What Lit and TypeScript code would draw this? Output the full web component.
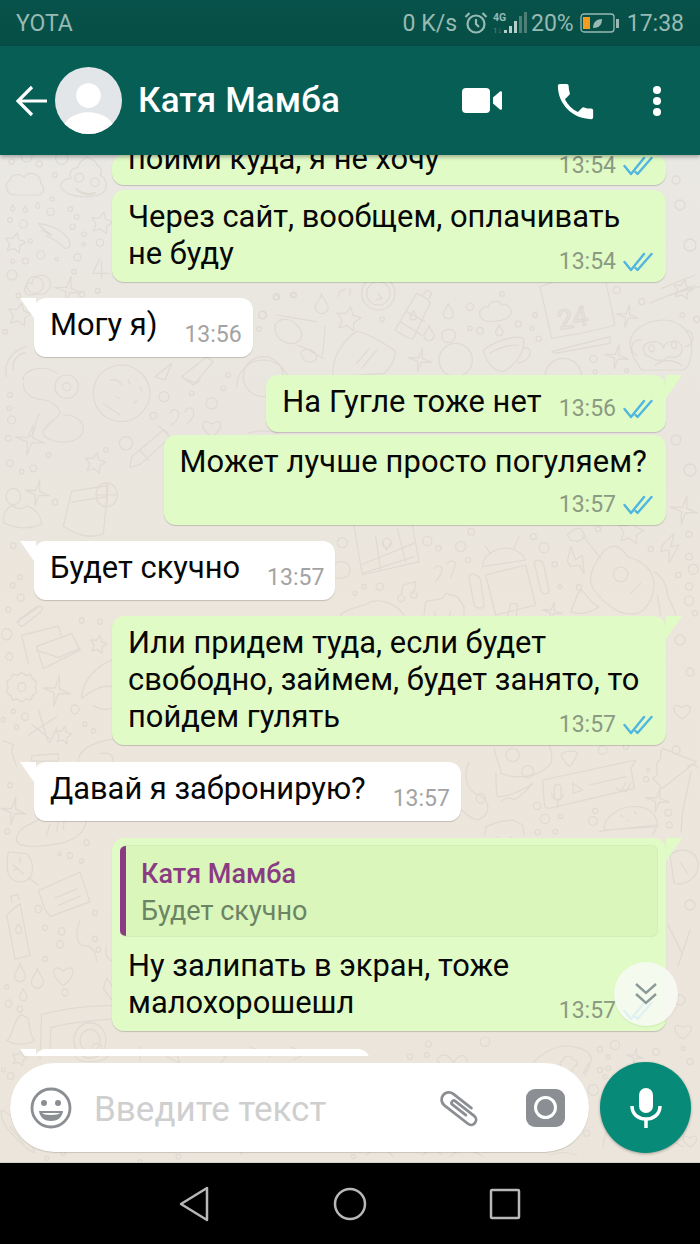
import { LitElement, html, css, svg } from "lit";
import { customElement } from "lit/decorators.js";

type Msg = {
  out: boolean; lines: string[]; time: string; tail?: boolean; wide?: boolean;
  mode: "row" | "under" | "overlap"; reply?: boolean; cls?: string;
};

const msgs: Msg[] = [
  { out: true, wide: true, lines: ["пойми куда, я не хочу"], time: "13:54", mode: "overlap", cls: "clipped" },
  { out: true, wide: true, lines: ["Через сайт, вообщем, оплачивать", "не буду"], time: "13:54", mode: "overlap", cls: "g5" },
  { out: false, tail: true, lines: ["Могу я)"], time: "13:56", mode: "row", cls: "g16" },
  { out: true, tail: true, lines: ["На Гугле тоже нет"], time: "13:56", mode: "row", cls: "g18" },
  { out: true, lines: ["Может лучше просто погуляем?"], time: "13:57", mode: "under", cls: "g3" },
  { out: false, tail: true, lines: ["Будет скучно"], time: "13:57", mode: "row", cls: "g16" },
  { out: true, tail: true, wide: true, lines: ["Или придем туда, если будет", "свободно, займем, будет занято, то", "пойдем гулять"], time: "13:57", mode: "overlap", cls: "g16" },
  { out: false, tail: true, lines: ["Давай я забронирую?"], time: "13:57", mode: "row", cls: "g17" },
  { out: true, tail: true, wide: true, reply: true, lines: ["Ну залипать в экран, тоже", "малохорошешл"], time: "13:57", mode: "overlap", cls: "g17" },
];

const ticks = html`<svg class="ticks" viewBox="0 0 30 20" fill="none" stroke="#4fb6e0" stroke-width="2.400" stroke-linecap="round" stroke-linejoin="round"><path d="M1.500 10l6.500 8L21 2"/><path d="M12.500 16l2 2L28.500 2"/></svg>`;

const star5 = (x: number, y: number, r: number) => {
  let d = "";
  for (let i = 0; i < 10; i++) {
    const a = i * Math.PI / 5 - Math.PI / 2 + .2, q = i % 2 ? r * .5 : r;
    d += `${i ? "L" : "M"}${(x + Math.cos(a) * q).toFixed(1)} ${(y + Math.sin(a) * q).toFixed(1)}`;
  }
  return d + "Z";
};
const star4 = (x: number, y: number, r: number) => {
  let d = "";
  for (let i = 0; i < 8; i++) {
    const a = i * Math.PI / 4 - Math.PI / 2 + .2, q = i % 2 ? r * .22 : r;
    d += `${i ? "L" : "M"}${(x + Math.cos(a) * q).toFixed(1)} ${(y + Math.sin(a) * q).toFixed(1)}`;
  }
  return d + "Z";
};
const heart = (x: number, y: number, s: number) => `M${x} ${y + s}C${x - s * 1.5} ${y},${x - s * .9} ${y - s},${x} ${y - s * .25}C${x + s * .9} ${y - s},${x + s * 1.5} ${y},${x} ${y + s}Z`;
const drop = (x: number, y: number, s: number) => `M${x} ${y - s}C${x + s * .2} ${y - s * .2},${x + s * .7} ${y},${x + s * .7} ${y + s * .4}A${s * .7} ${s * .7} 0 0 1 ${x - s * .7} ${y + s * .4}C${x - s * .7} ${y},${x - s * .2} ${y - s * .2},${x} ${y - s}Z`;

type Region = { o: [number, number]; s?: [number, number]; c: number[][]; p: string[]; r?: number[][] };

const regions: Region[] = [
  {
    o: [0, 155],
    c: [[35,20,8],[118,27,9],[165,60,7],[157,132,6],[30,195,7],[70,207,12],[152,170,11],[211,162,7],[230,185,7],[218,215,8],[252,238,7],[251,268,5],[300,263,11],[91,258,6],[122,300,12],[76,318,9],[38,318,6],[170,313,5],[232,307,11],[222,350,7],[36,360,15],[293,407,7],[55,422,7],[185,10,18],[80,5,16],[238,68,13],[285,82,13]],
    p: [
      "M45 120c-25 0-35-32-15-45 5-18 30-22 42-8 15-22 52-10 50 18 15 12 10 35-10 35z",
      "M260 5c10 10 30 8 30 25 15 5 18 22 10 30 15 8 25 25 15 45 -6 14-30 20-60 20-35 0-65-10-72-30-4-16 18-25 30-25-8-14 0-30 20-32 0-15 15-20 27-33z",
      "M228 100c15 15 40 20 58 12-5 14-48 8-58-12z",
      drop(38,158,9), drop(75,162,9), drop(113,150,9),
      "M115 205c40 5 85 25 95 60 2 12-10 20-20 12-18-22-35-25-50-35 8-2 12-2 15-2-15-12-30-18-40-35z M125 225c8 5 18 10 28 14",
      star5(45,265,32), star5(305,205,34),
      "M85 420c-20-10-10-40 12-35 0-25 38-35 52-8 8 18-5 35-20 40z",
      star4(205,405,42),
      "M300 310l-22 45h50M305 320v48",
    ],
  },
  {
    o: [0, 280],
    c: [[15,155,7],[35,420,12],[30,345,7],[28,385,7],[25,475,9],[30,550,10],[65,575,7],[100,565,10],[145,525,7],[318,510,7],[378,490,20],[460,407,10],[492,350,15],[575,340,7],[635,370,17],[685,285,7],[670,325,7],[788,105,12],[830,50,9],[880,45,9],[200,320,35],[200,320,12],[105,15,25],[245,42,9],[293,32,7]],
    p: [
      star5(58,105,36),
      "M20 290c-10-40 15-80 60-90 M40 270c-5-25 10-45 35-52 M70 300c-5-30 60-50 100-20 M70 310c0 35 30 45 60 50 20 0 50 20 50 40-10 20-50 35-50 60 0 15 40 30 70 25 30 0 50-20 50-40 0-20-20-40-60-40 M120 400c-20 20-10 60-30 70",
      "M280 340c0-50 40-85 85-85s85 40 85 85-40 85-85 85-85-35-85-85z",
      "M330 300c20-5 30 5 35 15M350 350l8 6M385 300l5 12M400 370l10-8M310 370c10 10 30 20 50 35M420 320l5 12",
      "M510 400c10-20 30-10 25 10-5 15-15 20-22 25M555 395c10-20 32-10 25 12-5 14-15 20-20 25",
      heart(635,440,30),
      star4(90,480,45),
      star5(285,550,32),
      "M395 530l95-80 20 22-90 82-30 8zM420 510l25 30M505 460l-30-22",
      "M465 290l50-40 -20 50zM545 290l75-60 20 15-60 70zM550 295l40 15 10-10",
      "M710 320a80 80 0 1 1 160 0",
      "M745 460c30-10 60-10 90 0",
    ],
  },
  {
    o: [250, 280],
    c: [[37,105,11],[27,147,7],[78,52,8],[132,45,7],[396,118,7],[660,80,11],[855,105,7],[805,132,9],[660,145,7],[690,152,10],[845,145,6],[866,176,8],[756,42,7],[1100,30,11],[1175,65,9],[1297,105,7],[1340,118,9],[1030,237,11],[617,240,50],[385,40,50],[385,40,35],[40,290,60],[940,290,55],[1035,275,6],[1130,272,6]],
    p: [
      drop(215,70,28),
      "M265 50c0-15 6-18 20-22M300 25v20",
      "M385 40l10 15-18 5",
      "M80 105l120 20M75 145c0-30 40-40 70-5 25 30 0 55-30 50-25-5-40-25-40-45zM140 195c25 5 50 25 80 40 M160 210c20-10 40 10 40 20 0 15-30 25-40 5-10-15-10-20 0-25zM225 140c-2 20-2 50-8 85",
      star5(295,118,38),
      "M255 240c5-25 40-75 65-85 15-5 90 40 112 55 10 10-5 50-30 70l-150 10c-10-10 0-40 3-50zM320 250l38-45M335 265l45-55",
      "M435 150l65-110c25 10 40 20 40 30l-50 105c-15 5-40-15-55-25zM520 45l10-15 15 8-8 18M450 125l65 40M470 95l55 30",
      drop(490,105,14), drop(595,92,22), drop(537,158,22), drop(748,150,16),
      "M575 165c0-20 40-25 42 0 0 25-42 35-42 0z",
      "M715 125c-35-5-35-45 0-45 5-20 35-20 40-5 20-10 35 20 25 30-5 15-40 20-65 20z",
      "M700 210c40-30 100-45 120-35 10 50-40 90-60 100-30 0-55-35-60-65zM720 220c30-20 60-25 85-25M820 205c25-10 35 30-15 45",
      "M870 20c50-20 130-40 190-50l35 165c-50 15-130 30-190 40zM905 215l175-45v20l-165 30z",
      star4(510,240,36),
      star4(1132,108,34), star4(1100,230,36),
      "M1200 70c30-15 100-40 150-50M1235 25l100-40M1235 55l100-40",
      "M1140 190c0-40 50-70 100-70s90 40 85 90-20 60-30 60h-120c-20-30-35-50-35-80z",
      "M1180 200c20-25 60-15 60 5 5-25 50-30 55-5 5 30-20 35-40 30-15 15-40 15-55 0-15 0-20-15-20-30z",
      "M1205 205m-8 0a8 10 0 1 0 16 0a8 10 0 1 0-16 0M1272 195m-8 0a8 10 0 1 0 16 0a8 10 0 1 0-16 0",
      "M1215 255c20-15 50-20 80 0",
      "M1175 180c-25-5-45 30-15 45M1310 150c30 10 20 50-5 50",
    ],
  },
  {
    o: [0, 480], s: [3, 2.703],
    c: [[40,178,8],[60,262,7],[38,285,7],[62,318,10],[25,350,7],[20,417,15],[28,477,10],[245,380,7],[300,383,7],[75,640,10],[40,625,6],[10,648,6],[50,668,6],[225,620,12],[255,660,6],[280,678,6],[30,825,7],[22,950,7],[260,980,8],[210,1015,8],[245,1030,6],[178,1010,5],[115,1160,10],[135,1210,7],[185,1220,10],[180,1255,10],[135,1295,7],[195,1385,9],[25,1415,10],[20,1370,6],[285,1170,7],[285,1240,7],[295,1270,7],[165,60,8],[40,45,22],[320,40,32],[65,560,12],[270,1515,48],[270,1515,30]],
    p: [
      "M10 115c0-30 15-45 30-45 10 10 30 10 40 0 20 5 45 25 45 50-40 15-80 10-115-5z",
      star4(112,35,36),
      "M190 125l25-95 110-15-15 130c-35 15-80 5-120-20zM215 60l105-15",
      "M320 10l0 60M290 40l60 0",
      "M50 385l70-45M60 375l50-32c15-8 25 5 10 15l-50 35c-12 8-20-8-10-18z",
      "M65 420l110-25 10 30M85 495l-20-75M130 510l110-50-25-45-105 35zM110 460l65 20 65-25",
      star5(295,445,26),
      "M65 520l12 8 15-3 6 13 12 7-4 15 4 15-12 7-6 13-15-3-12 8-12-8-15 3-6-13-12-7 4-15-4-15 12-7 6-13 15 3z",
      star4(170,570,42),
      "M115 620l30 90M170 640l-85 50M95 660l55 40M170 670l-20 40",
      star5(190,690,25),
      "M245 590c0-50 50-90 95-105M245 590c30-20 60-40 95-30M280 610c20 10 40 15 60 5",
      "M10 705l30 10 -5 20 15 40",
      "M95 745l80-5v20h-80z M235 760c0-30 40-50 105-60M300 740c30-5 40 0 40 30",
      star4(40,895,38),
      "M60 985c-20-10-10-40 30-55 50-25 130-40 170-20 0 50-50 70-100 75-40 5-70 10-100 0zM140 960l10-30M170 950l5-25M190 945l2-20",
      "M25 1005l55 5c20 20 25 50 5 70-20 10-45 10-60-15-5-20-5-40 0-60zM40 1040l30 25M85 1075l30 20M60 1035l0-15M55 1050l-15 5",
      "M115 1110l125-50 30 80-120 40-15-20zM165 1130l65-25M175 1150l65-25",
      "M20 1175l40-30 30 140-45 10zM35 1140l-2-15 20-5 5 15M55 1200c-15 20-5 30 5 25 10-5 5-15-5-25z",
      drop(60,1330,24), drop(112,1345,26), drop(70,1390,16),
      heart(190,1335,32),
      "M20 1515c20-10 20-60 45-70l20 10c5 25 5 50 20 60-20 10-60 15-85 0z M60 1430m-8 0a8 8 0 1 0 16 0a8 8 0 1 0-16 0",
      "M120 1565l5-120c60-15 150-25 235-25M150 1550l2-70c60-15 130-20 200-25",
      "M240 1190c-20 50-5 70 20 70 15 0 30 20 30 40M320 1260c-10 30 10 40 25 40M320 1345l25 35-10 25-25-30z",
    ],
  },
  {
    o: [334, 525],
    c: [[25,53,15],[280,48,14],[313,70,8],[380,65,15],[403,105,8],[598,35,9],[630,68,15],[412,20,10],[662,118,8],[678,185,6],[137,185,11],[90,185,7],[63,205,6],[950,72,8],[1065,28,9],[1065,95,10],[1078,133,15],[1033,150,8],[1065,185,11],[1065,227,14],[1083,265,8],[792,12,8],[860,148,22],[735,187,8]],
    p: [
      "M60 0l25 150 170-40-20-110M80 120l160-65M85 145l155-50M190 10l25 100M125 35l15 100",
      "M160 40a14 14 0 1 1-3 0zM157 75l-12-25M157 75l14-22",
      "M-2 120c20-20 50-10 50 15s-30 30-50 20",
      "M300 130c10-15 30-5 22 12-5 14-14 22-18 30M340 115c12-15 30-5 22 12-4 12-10 22-12 30",
      "M207 180l-5 30M245 170l-5 35M210 215a10 10 0 1 1-8-5M248 205a10 10 0 1 1-8-5M207 180l38-10",
      "M445 125c0-30 30-50 60-55 35-5 60 15 70 35zM455 65l15 22M555 35l-15 35",
      "M455 150l120-30 30 120-120 30zM405 155c5-15 30-5 35 10l10 75c0 15-25 10-30 0zM600 110c15-10 30 0 30 15l15 70c0 15-20 15-25 0zM520 276l10-40 20 0-3 40",
      "M700 110l10-45 15 40 20-15 5 55-15-25-25 5z",
      "M700 30c10-10 25-25 40-20l15 25-25 15-20-5zM745 30l55 70M800 90c30-40 60-30 80 5 40 10 80 40 80 80 0 40-20 80-50 90-50 10-90-20-130-70-20-30-10-60 20-105zM890 205l30-30M960 140c20 10 40 40 40 70 10 20 20 40 25 60M980 270l-10-60",
      star4(655,260,30),
      "M710 260c15-30 15-50 30-65 20 10 25 40 55 50-30 20-60 25-85 15z",
      "M270 270l5-40 50-10 10-15 35 10 20 30v25M325 260m-24 0a24 24 0 1 0 48 0",
      "M20 270c30-30 70-20 90-40 40-10 80 10 100 40",
      "M985 60l35-35-10 40 25-5-30 55 0-40-25 5z",
      star5(890,20,40),
    ],
  },
  {
    o: [461, 745],
    c: [[425,15,13],[228,183,11],[252,222,14],[298,214,7],[403,198,8],[396,228,13],[230,262,8],[283,260,7],[555,103,8],[562,75,5],[622,203,10],[625,240,9],[495,5,8],[60,160,14],[200,80,18],[155,30,20]],
    p: [
      "M100 10c0 20 20 55 20 75 50 20 120 10 150-30 5-15 0-40-5-55",
      "M105 85c0 25 0 60 5 70 30 0 80-20 105-40-15 20-40 40-55 50-15-10-30-5-40 5",
      "M300 30c10-15 45-15 50-5-5 15-15 30-25 40-10-10-20-20-25-35z",
      "M245 105l280-60-15 25 10 60-255 60c-10 0-15-5-15-15z",
      "M280 130c0-15 20-15 20 0v25c0 15-20 15-20 0zM272 145c0 25 35 25 35 0M290 170v18",
      "M335 115l30 20-28 10z",
      "M385 120l110-25M465 130l15 8 15-25M480 135l15 5 15-27",
      star4(590,165,36),
      "M430 255c-5-40 50-75 100-70s60 40 60 60zM415 260c50-10 130-15 175-20l-15 30M480 210l5 5M520 200l6 6M500 225l6 3",
      "M25 50c-20 40-10 90 30 100 35 20 35 60 -5 75-20 0-40-25-60-40",
      "M605 10l100 40-100 80 -30-30c25-10 5-30 15-50 20-10 0-30 15-40zM680 65c10-10 30-5 30 5M690 80l-25 120-5 60",
      "M70 270l5-25 40-15 40-5 30 15 5 30M130 275m-20 0a20 20 0 1 0 40 0",
    ],
  },
  {
    o: [0, 1040],
    c: [[32,108,10],[10,90,6],[140,355,6],[190,340,6],[535,350,7],[420,365,6]],
    p: [
      star5(58,55,24),
      "M4 210c-5 40 30 70 60 100 10 10 30 25 40 30-10-20 0-50-20-70-30-30-60-50-80-60zM30 260l40 50",
      "M720 345c20-30 60-35 90-25 30-20 80-20 110 5",
      "M220 30c0 30 20 35 50 35s60-5 60-35M290 10a15 15 0 1 0 0.100 0",
      "M420 20v40M500 50l40 20-15-40M590 30l90 20 -30 30M750 20l60 30M870 20l50 20-40 20",
    ],
  },
  {
    o: [350, 1040],
    c: [[235,12,9],[405,5,14],[180,50,8],[230,45,7],[795,15,14],[750,28,8],[775,50,6],[918,35,10],[1000,25,6],[1020,65,9],[750,90,8],[775,85,7],[765,110,6],[730,150,16],[710,280,9],[10,350,6]],
    p: [
      "M260 60c20-30 40-10 50 10 20-40 50-20 40 5 30-5 30 25 5 25-20 10-55 0-95-40zM310 70c10 20 5 40-5 50",
      "M530 100c30-60 90-90 140-80 50 10 60 30 50 50M640 60c0-15 25-15 30 0 15 0 15 20 0 20 5 15-15 20-25 5-15 5-20-20-5-25z",
      "M700 100l15-30 5 4-15 30z",
      star4(855,50,26),
      "M760 320c0-40 20-70 60-80M1000 320c-30-10-50-40-30-50 10-5 25 5 30 15",
      heart(1020,300,22),
      "M50 345c30-30 60-20 80 5M220 345l30-30 25 30M300 350c30-30 70-20 100 0M600 345c30-10 50-10 80 0",
    ],
  },
];

function doodles() {
  return svg`<g fill="none" stroke="#dfdad2" stroke-linecap="round" stroke-linejoin="round" stroke-width="3.600">
    ${regions.map(r => {
      const s = r.s ?? [3, 3];
      return svg`<g transform="translate(${r.o[0]} ${r.o[1]}) scale(${1 / s[0]} ${1 / s[1]})">
        ${r.c.map(c => svg`<circle cx=${c[0]} cy=${c[1]} r=${c[2]}/>`)}
        ${r.p.map(d => svg`<path d=${d}/>`)}
      </g>`;
    })}
    <text x="558" y="326" font-size="27" font-family="Roboto" fill="none" stroke="#dfdad2" stroke-width="1.200" transform="rotate(-10 580 320)">24</text>
  </g>
  <g fill="none" stroke="#dfdad2" stroke-width="1.300" stroke-linecap="round" stroke-linejoin="round">
    <circle cx="680" cy="205" r="5"/><circle cx="690" cy="245" r="6"/><circle cx="676" cy="180" r="4"/>
    <path d=${star5(683, 290, 10)}/><circle cx="676" cy="440" r="5"/><circle cx="690" cy="470" r="6"/><path d=${star4(684, 510, 14)}/>
    <circle cx="680" cy="640" r="5"/><circle cx="690" cy="672" r="4"/><path d=${heart(682, 710, 9)}/><circle cx="676" cy="750" r="4"/>
    <path d="M670 855c10-8 26-6 28 8s-14 24-24 20zM680 862l8 12"/><circle cx="690" cy="905" r="5"/><path d="M668 925l14 28M690 930l-12 36"/>
    <circle cx="680" cy="1000" r="5"/><path d=${heart(683, 1030, 9)}/>
  </g>`;
}

@customElement("app-root")
export class AppRoot extends LitElement {
  static styles = css`
    :host { display: block; width: 700px; height: 1244px; overflow: hidden; font-family: Roboto, "Noto Sans", sans-serif; }
    .app { display: flex; flex-direction: column; height: 1244px; }
    .status { height: 46px; flex: none; background: linear-gradient(#07524a, #064e46); color: #97bab3; font-size: 23px; display: flex; align-items: center; padding: 0 16px; box-sizing: border-box; }
    .status .right { margin-left: auto; display: flex; align-items: center; }
    .alarm { width: 24px; height: 24px; margin: 0 5px 0 7px; }
    .signal { width: 35px; height: 24px; margin-right: 3px; }
    .battery { width: 39px; height: 20px; margin: 0 8px 0 6px; }
    .header { height: 109px; flex: none; background: #075e55; color: #fff; display: flex; align-items: center; box-shadow: 0 2px 4px rgba(0,0,0,.3); z-index: 2; position: relative; }
    .back { width: 33px; height: 32px; margin-left: 15px; flex: none; }
    .avatar { width: 67px; height: 67px; margin-left: 7px; flex: none; margin-right: 16px; }
    .title { font-size: 35px; font-weight: 500; letter-spacing: .1px; flex: 1; }
    .hicon { flex: none; fill: #fff; }
    .video { width: 41px; height: 27px; margin-right: 49px; }
    .phone { width: 47px; height: 47px; margin-right: 52px; margin-top: 1px; }
    .dots { width: 12px; height: 32px; margin-right: 37px; }
    .main { flex: 1; position: relative; background: linear-gradient(#eae8e3, #eae6df 28%, #ece6dc 45%, #ece5dc); display: flex; flex-direction: column; overflow: hidden; }
    .wall { position: absolute; left: 0; top: 0; width: 700px; height: 1007px; }
    .messages { position: relative; height: 901px; overflow: hidden; flex: none; display: flex; flex-direction: column; padding: 0 34px; box-sizing: border-box; }
    .bubble { position: relative; border-radius: 12px; box-shadow: 0 1px 1px rgba(0,0,0,.18); box-sizing: border-box; flex: none; color: #060706; font-size: 30.850px; line-height: 37px; padding: 8px 13px 0 16px; }
    .bubble.in { background: #fff; align-self: flex-start; padding-right: 11px; }
    .bubble.out { background: #e1fbc7; align-self: flex-end; }
    .bubble.wide { width: 554px; }
    .tail { position: absolute; top: 0; width: 16px; height: 23px; }
    .in .tail { left: -14px; background: #fff; clip-path: polygon(0 0, 100% 0, 100% 100%); }
    .out .tail { right: -16px; background: #e1fbc7; clip-path: polygon(0 0, 100% 0, 0 100%); }
    .clipped { height: 30px; padding-top: 0; }
    .clipped .text { margin-top: -15px; }
    .g3 { margin-top: 3px; } .g5 { margin-top: 5px; } .g16 { margin-top: 16px; } .g17 { margin-top: 17px; } .g18 { margin-top: 18px; }
    .rowin { display: flex; align-items: flex-start; }
    .meta { display: flex; align-items: center; justify-content: flex-end; height: 29px; font-size: 23px; color: #8b9a82; }
    .in .meta { color: #a3a3a3; }
    .ticks { width: 30px; height: 20px; margin-left: 7px; flex: none; }
    .rowin .meta { margin-left: auto; }
    .m-row.in { padding-bottom: 8px; }
    .m-row.out { padding-bottom: 9px; }
    .m-row.out .text { letter-spacing: .1px; }
    .in .rowin .meta { padding-left: 27px; margin-top: 14px; }
    .out .rowin .meta { padding-left: 17px; margin-top: 11px; }
    .m-under { padding-right: 19px; padding-bottom: 6px; }
    .m-under .text { letter-spacing: .14px; }
    .m-under .meta { margin-top: 10px; margin-right: -6px; }
    .m-overlap .meta { margin-top: -25px; padding-bottom: 6px; }
    .clipped.m-overlap .meta { margin-top: -26px; }
    .reply { display: flex; height: 92px; margin: -1px -5px 10px -8px; background: #daf6bb; border: 1px solid #d3efb6; border-left: none; border-radius: 6px; box-sizing: border-box; overflow: hidden; }
    .reply .bar { width: 6px; background: #8a3b84; flex: none; }
    .rc { padding: 10px 15px; font-size: 27px; line-height: 37px; }
    .rn { color: #8a3b84; font-weight: 500; }
    .rt { color: #6b8464; }
    .scroll { position: absolute; left: 614px; top: 807px; width: 64px; height: 64px; border-radius: 50%; background: rgba(247,250,245,.86); box-shadow: 0 1px 2px rgba(0,0,0,.08); display: flex; align-items: center; justify-content: center; }
    .scroll svg { width: 24px; height: 24px; }
    .last { width: 336px; height: 40px; }
    .composer { position: relative; flex: 1; display: flex; align-items: flex-start; padding: 6px 9px 0 10px; gap: 11px; }
    .field { flex: 1; height: 89px; margin-top: 1px; border-radius: 45px; background: #fff; box-shadow: 0 1px 1px rgba(0,0,0,.15); display: flex; align-items: center; padding: 0 24px 0 20px; box-sizing: border-box; }
    .emoji { width: 42px; height: 42px; flex: none; margin-right: 22px; }
    .placeholder { font-size: 35px; color: #cfcfcf; flex: 1; padding-top: 3px; }
    .clip { width: 44px; height: 44px; flex: none; margin-right: 44px; }
    .cam { width: 39px; height: 38px; flex: none; border-radius: 9px; background: #8b8e92; display: flex; align-items: center; justify-content: center; }
    .cam span { width: 17px; height: 17px; border: 3px solid #fff; border-radius: 50%; box-sizing: content-box; }
    .mic { width: 91px; height: 91px; border-radius: 50%; background: #078b78; flex: none; box-shadow: 0 1px 3px rgba(0,0,0,.3); display: flex; align-items: center; justify-content: center; }
    .mic svg { width: 32px; height: 40px; }
    .nav { height: 82px; flex: none; background: #000; display: flex; align-items: center; justify-content: center; gap: 121.500px; border-top: 1px solid #d5d3ce; box-sizing: border-box; padding-right: 1px; }
    .nav svg { fill: none; stroke: #b8b8b8; stroke-width: 2.500; stroke-linejoin: round; }
    .nb { width: 34px; height: 38px; }
  `;

  bubble(m: Msg) {
    const meta = html`<div class="meta"><span>${m.time}</span>${m.out ? ticks : ""}</div>`;
    const text = html`<div class="text">${m.lines.map(l => html`<div>${l}</div>`)}</div>`;
    const cls = ["bubble", m.out ? "out" : "in", m.wide ? "wide" : "", "m-" + m.mode, m.cls ?? ""].join(" ");
    return html`<div class=${cls}>
      ${m.tail ? html`<div class="tail"></div>` : ""}
      ${m.reply ? html`<div class="reply"><div class="bar"></div><div class="rc"><div class="rn">Катя Мамба</div><div class="rt">Будет скучно</div></div></div>` : ""}
      ${m.mode === "row" ? html`<div class="rowin">${text}${meta}</div>` : html`${text}${meta}`}
    </div>`;
  }

  render() {
    return html`<div class="app">
      <div class="status">
        <span>YOTA</span>
        <div class="right">
          <span>0 K/s</span>
          <svg class="alarm" viewBox="0 0 24 24" fill="none" stroke="#97bab3" stroke-width="2.200"><circle cx="12" cy="13" r="8.500"/><path d="M12 8v5l3 3M1.500 6l4-4M22.500 6l-4-4"/></svg>
          <svg class="signal" viewBox="0 0 35 24"><text x="0" y="10" font-size="10.500" font-weight="700" fill="#97bab3" font-family="Roboto">4G</text><text x="0" y="22" font-size="8" fill="#5d8a82" font-family="Roboto">1↓</text><g fill="#b6cfca"><rect x="11" y="19" width="3" height="3"/><rect x="16" y="15" width="3" height="7"/><rect x="21" y="10" width="3" height="12"/></g><g fill="#4d7f76"><rect x="26" y="5" width="3" height="17"/><rect x="31" y="1" width="3" height="21"/></g></svg>
          <span>20%</span>
          <svg class="battery" viewBox="0 0 39 20" fill="none"><rect x="1" y="1" width="33" height="18" rx="3" stroke="#97bab3" stroke-width="1.300"/><rect x="3" y="4" width="7" height="12" fill="#f59b1f"/><path d="M13 15c0-6 4-9 9-9 0 6-3 9-9 9z" fill="#97bab3"/><rect x="36" y="6" width="3" height="9" fill="#97bab3"/></svg>
          <span>17:38</span>
        </div>
      </div>
      <div class="header">
        <svg class="back" viewBox="0 0 33 32" fill="none" stroke="#fff" stroke-width="3.200"><path d="M32 16H3M17 2L3 16l14 14"/></svg>
        <svg class="avatar" viewBox="0 0 68 68"><defs><clipPath id="av"><circle cx="34" cy="34" r="34"/></clipPath></defs><circle cx="34" cy="34" r="34" fill="#e2e6e9"/><g clip-path="url(#av)" fill="#fff"><circle cx="34" cy="29" r="12.500"/><ellipse cx="34" cy="64" rx="26" ry="18"/></g></svg>
        <div class="title">Катя Мамба</div>
        <svg class="hicon video" viewBox="0 0 41 27"><rect x="0" y="1" width="28" height="25" rx="4"/><path d="M31 10.500l7-6c1-.6 2 0 2 1v16c0 1-1 1.600-2 1l-7-6z"/></svg>
        <svg class="hicon phone" viewBox="0 0 24 24"><path d="M6.600 10.800c1.400 2.800 3.800 5.100 6.600 6.600l2.200-2.200c.3-.3.700-.4 1-.2 1.100.4 2.300.6 3.600.6.600 0 1 .4 1 1V20c0 .6-.4 1-1 1C10.600 21 3 13.400 3 4c0-.6.400-1 1-1h3.500c.6 0 1 .4 1 1 0 1.300.2 2.500.6 3.600.1.300 0 .7-.2 1z"/></svg>
        <svg class="hicon dots" viewBox="0 0 12 32"><circle cx="6" cy="5" r="4"/><circle cx="6" cy="16" r="4"/><circle cx="6" cy="27" r="4"/></svg>
      </div>
      <div class="main">
        <svg class="wall" viewBox="0 0 700 1007"><g transform="translate(0 -155)">${doodles()}</g></svg>
        <div class="messages">
          ${msgs.map(m => this.bubble(m))}
          <div class="bubble in g18 last"><div class="tail"></div></div>
        </div>
        <div class="scroll"><svg viewBox="0 0 24 24" fill="none" stroke="#8c9a97" stroke-width="2.400"><path d="M2 2l10 9 10-9M2 12l10 9 10-9"/></svg></div>
        <div class="composer">
          <div class="field">
            <svg class="emoji" viewBox="0 0 42 42"><circle cx="21" cy="21" r="19" fill="none" stroke="#8b8e92" stroke-width="2.800"/><circle cx="14" cy="16" r="3" fill="#8b8e92"/><circle cx="28" cy="16" r="3" fill="#8b8e92"/><path d="M9 24h24c-1 7-6 10-12 10S10 31 9 24z" fill="#8b8e92"/><path d="M12 26h18c-1 1-4 2-9 2s-8-1-9-2z" fill="#fff"/></svg>
            <div class="placeholder">Введите текст</div>
            <svg class="clip" viewBox="0 0 44 44" fill="none" stroke="#8b8e92" stroke-width="2.800" stroke-linecap="round"><path transform="rotate(38 22 22)" d="M31 15H8a7 7 0 0 0 0 14.500H38a5 5 0 0 0 0-10H14a2.200 2.200 0 0 0 0 4.500H31"/></svg>
            <div class="cam"><span></span></div>
          </div>
          <div class="mic"><svg viewBox="0 0 32 40"><rect x="9" y="0" width="14" height="25" rx="7" fill="#fff"/><path d="M2 18c0 9 7 13 14 13s14-4 14-13" fill="none" stroke="#fff" stroke-width="3.500"/><rect x="14.250" y="30" width="3.500" height="10" fill="#fff"/></svg></div>
        </div>
      </div>
      <div class="nav">
        <svg class="nb" viewBox="0 0 34 38"><path d="M4 19L30 3v32z"/></svg>
        <svg class="nb" viewBox="0 0 34 38"><circle cx="17" cy="19" r="15"/></svg>
        <svg class="nb" viewBox="0 0 34 38"><rect x="3" y="5" width="28" height="28" rx="1"/></svg>
      </div>
    </div>`;
  }
}
